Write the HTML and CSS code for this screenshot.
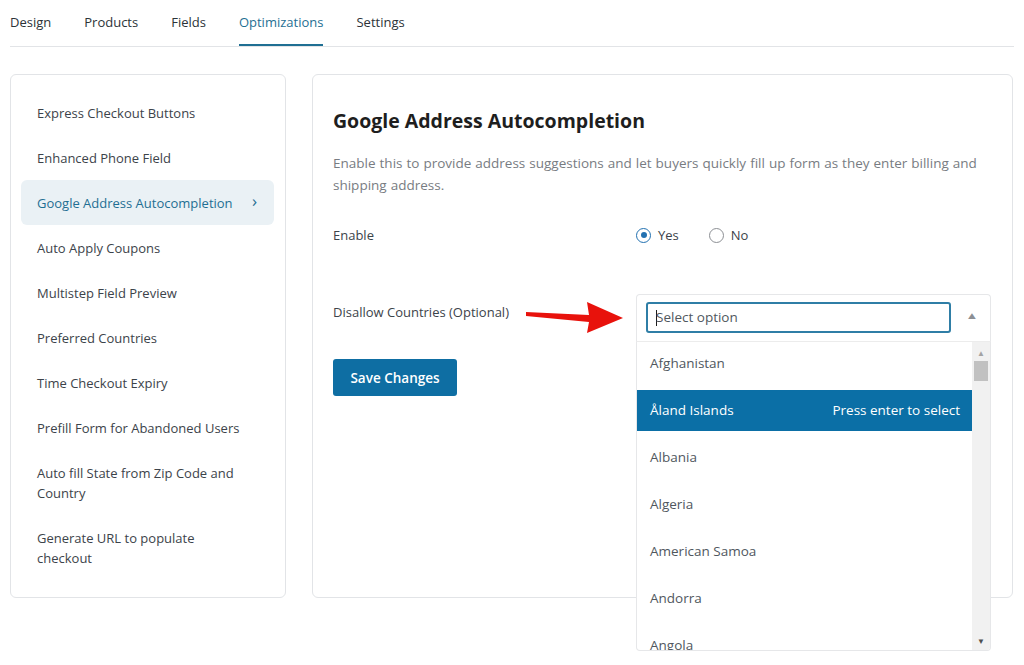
FILE: index.html
```html
<!DOCTYPE html>
<html lang="en">
<head>
  <meta charset="UTF-8" />
  <meta name="viewport" content="width=device-width, initial-scale=1.0"/>
  <title>Optimizations</title>
  <link rel="stylesheet" href="styles.css">
</head>
<body>
  <nav class="tabs">
    <a class="tab">Design</a>
    <a class="tab">Products</a>
    <a class="tab">Fields</a>
    <a class="tab active">Optimizations</a>
    <a class="tab">Settings</a>
  </nav>

  <div class="layout">
    <aside class="sidebar">
      <div class="side-item">Express Checkout Buttons</div>
      <div class="side-item">Enhanced Phone Field</div>
      <div class="side-item active">Google Address Autocompletion <span class="chev">&#8250;</span></div>
      <div class="side-item">Auto Apply Coupons</div>
      <div class="side-item">Multistep Field Preview</div>
      <div class="side-item">Preferred Countries</div>
      <div class="side-item">Time Checkout Expiry</div>
      <div class="side-item">Prefill Form for Abandoned Users</div>
      <div class="side-item">Auto fill State from Zip Code and Country</div>
      <div class="side-item">Generate URL to populate checkout</div>
    </aside>

    <main class="panel">
      <h1>Google Address Autocompletion</h1>
      <p class="desc">Enable this to provide address suggestions and let buyers quickly fill up form as they enter billing and shipping address.</p>

      <div class="row">
        <div class="row-label">Enable</div>
        <div class="radios">
          <label class="radio"><span class="dot checked"></span>Yes</label>
          <label class="radio"><span class="dot"></span>No</label>
        </div>
      </div>

      <div class="row row-select">
        <div class="row-label">Disallow Countries (Optional)</div>
        <svg class="arrow" width="100" height="34" viewBox="0 0 100 34">
          <path d="M1 11 L64 14 L62 1 L98 17 L62 32 L64 21 L1 15 Z" fill="#e8120c"/>
        </svg>
        <div class="select">
          <div class="search"><span class="cursor"></span>Select option</div>
          <span class="caret">&#9650;</span>
          <div class="select-list">
            <ul class="options">
              <li>Afghanistan</li>
              <li class="hl">Åland Islands <span>Press enter to select</span></li>
              <li>Albania</li>
              <li>Algeria</li>
              <li>American Samoa</li>
              <li>Andorra</li>
              <li>Angola</li>
            </ul>
            <div class="scrollbar">
              <span class="sb-up">&#9650;</span>
              <span class="sb-thumb"></span>
              <span class="sb-down">&#9660;</span>
            </div>
          </div>
        </div>
      </div>

      <button class="save">Save Changes</button>
    </main>
  </div>
</body>
</html>
```

FILE: styles.css
```css
html, body {
  min-height: 665px;
}

body {
  font-family: "Open Sans", "Noto Sans", sans-serif;
  font-size: 13px;
  color: #3c434a;
  background: #fff;
  margin: 0;
  padding: 0 10px;
}

.tabs {
  display: flex;
  gap: 33px;
  height: 47px;
  border-bottom: 1px solid #e2e4e7;
  box-sizing: border-box;
}

.tab {
  font-size: 13px;
  color: #2c3338;
  padding-top: 13px;
  height: 46px;
  box-sizing: border-box;
}

.tab.active {
  color: #1f6f93;
  border-bottom: 2px solid #1f6f93;
}

.layout {
  display: flex;
  gap: 26px;
  margin-top: 27px;
  padding-right: 1px;
}

.sidebar {
  width: 276px;
  flex-shrink: 0;
  border: 1px solid #e2e4e7;
  border-radius: 6px;
  padding: 15px 11px 15px 10px;
  box-sizing: border-box;
  height: 524px;
}

.side-item {
  position: relative;
  padding: 12.5px 30px 12.5px 16px;
  line-height: 20px;
  color: #3c434a;
  border-radius: 6px;
}

.side-item.active {
  background: #eaf1f5;
  color: #1f6f93;
}

.chev {
  position: absolute;
  right: 17px;
  top: 11px;
  font-size: 17px;
}

.panel {
  flex: 1;
  position: relative;
  border: 1px solid #e2e4e7;
  border-radius: 6px;
  padding: 32px 20px;
  height: 524px;
  box-sizing: border-box;
}

h1 {
  margin: 0;
  font-size: 19.5px;
  font-weight: 700;
  line-height: 28px;
  color: #1e1e1e;
}

.desc {
  margin: 17px 0 0;
  font-size: 13.5px;
  line-height: 22px;
  color: #787c82;
  max-width: 650px;
  word-spacing: 0.5px;
}

.row {
  display: flex;
  align-items: center;
  margin-top: 24px;
  height: 30px;
}

.row-label {
  width: 303px;
  flex-shrink: 0;
  color: #3c434a;
}

.radios {
  display: flex;
  gap: 30px;
}

.radio {
  display: flex;
  align-items: center;
  gap: 7px;
  color: #3c434a;
}

.dot {
  width: 15px;
  height: 15px;
  border: 1px solid #8c8f94;
  border-radius: 50%;
  box-sizing: border-box;
  position: relative;
}

.dot.checked {
  border-color: #2271b1;
}

.dot.checked::after {
  content: "";
  position: absolute;
  left: 3.5px;
  top: 3.5px;
  width: 6px;
  height: 6px;
  border-radius: 50%;
  background: #2271b1;
}

.row-select {
  margin-top: 44px;
  height: 48px;
  align-items: flex-start;
  position: relative;
}

.row-select .row-label {
  padding-top: 9px;
}

.arrow {
  position: absolute;
  left: 192px;
  top: 7px;
}

.select {
  position: relative;
  width: 355px;
  height: 48px;
  border: 1px solid #e6e7e9;
  border-bottom-color: #ececec;
  border-radius: 4px 4px 0 0;
  box-sizing: border-box;
  background: #fff;
}

.search {
  position: absolute;
  left: 9px;
  top: 7px;
  width: 305px;
  height: 31px;
  border: 2px solid #2f7ea6;
  border-radius: 3px;
  box-sizing: border-box;
  padding: 0 8px;
  line-height: 27px;
  font-size: 13.5px;
  color: #50575e;
  display: flex;
  align-items: center;
}

.cursor {
  width: 1px;
  height: 16px;
  background: #1e1e1e;
  margin-right: -1px;
}

.caret {
  position: absolute;
  right: 13px;
  top: 13px;
  font-size: 10px;
  color: #8c8f94;
  transform: scaleX(1.3);
}

.select-list {
  position: absolute;
  left: -1px;
  right: -1px;
  top: 47px;
  height: 308px;
  display: flex;
  overflow: hidden;
  background: #fff;
  border: 1px solid #e6e7e9;
  border-top: none;
  border-radius: 0 0 4px 4px;
  z-index: 2;
}

.options {
  flex: 1;
  list-style: none;
  margin: 0;
  padding: 1px 0 0;
  display: flex;
  flex-direction: column;
  gap: 6px;
}

.options li {
  flex-shrink: 0;
  height: 41px;
  line-height: 41px;
  padding: 0 12px 0 13px;
  font-size: 13.5px;
  color: #50575e;
  display: flex;
  justify-content: space-between;
}

.options li.hl {
  background: #0b6fa6;
  color: #fff;
}

.scrollbar {
  width: 18px;
  background: #f1f1f1;
  position: relative;
}

.sb-up, .sb-down {
  position: absolute;
  left: 5px;
  font-size: 8px;
  color: #a3a3a3;
}

.sb-up { top: 5px; }

.sb-down {
  bottom: 4px;
  color: #505050;
}

.sb-thumb {
  position: absolute;
  left: 2px;
  right: 2px;
  top: 19px;
  height: 20px;
  background: #c1c1c1;
}

.save {
  display: block;
  margin-top: 17px;
  width: 124px;
  height: 37px;
  border: none;
  border-radius: 3px;
  background: #0e6ea3;
  color: #fff;
  font-family: inherit;
  font-size: 13.5px;
  font-weight: 600;
}
```
